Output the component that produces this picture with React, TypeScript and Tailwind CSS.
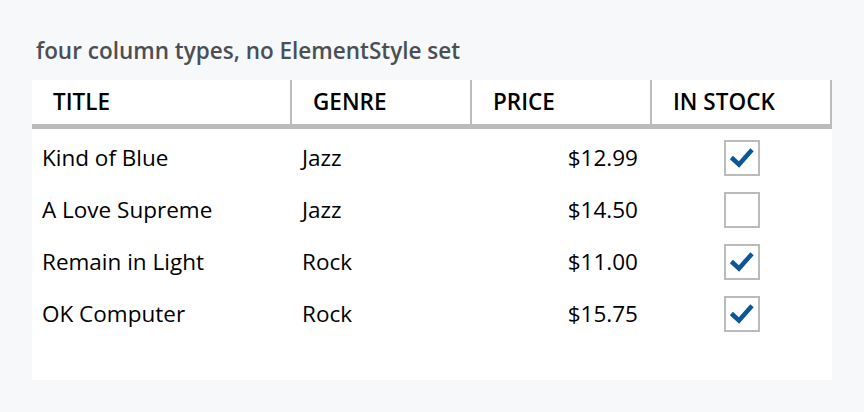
import React from "react";

const rows = [
  { title: "Kind of Blue", genre: "Jazz", price: "$12.99", stock: true },
  { title: "A Love Supreme", genre: "Jazz", price: "$14.50", stock: false },
  { title: "Remain in Light", genre: "Rock", price: "$11.00", stock: true },
  { title: "OK Computer", genre: "Rock", price: "$15.75", stock: true },
];

function Check({ on }: { on: boolean }) {
  return (
    <div className="w-[36px] h-[36px] border-2 border-[#bbbbbb] bg-white flex items-center justify-center">
      {on && (
        <svg width="36" height="36" viewBox="0 0 36 36" className="shrink-0">
          <path d="M9 19 L15 24.5 L26.5 11.5" fill="none" stroke="#0b5697" strokeWidth="4.5" strokeLinecap="square" strokeLinejoin="miter" />
        </svg>
      )}
    </div>
  );
}

export default function App() {
  return (
    <div
      className="w-[864px] h-[412px] bg-[#f7f8fa] pt-[32px] px-[32px]"
      style={{ fontFamily: '"Segoe UI", "Open Sans", "Noto Sans", sans-serif' }}
    >
      <div className="h-[38px] pl-[4px] text-[22.5px] font-semibold text-[#4a4f56] leading-[38px] whitespace-nowrap">
        four column types, no ElementStyle set
      </div>
      <div className="w-[800px] h-[300px] bg-white mt-[10px]">
        <div className="flex h-[44px] text-[22.5px] font-semibold text-black whitespace-nowrap">
          <div className="w-[260px] border-r-2 border-[#bbbbbb] pl-[21px] flex items-center">TITLE</div>
          <div className="w-[180px] border-r-2 border-[#bbbbbb] pl-[21px] flex items-center">GENRE</div>
          <div className="w-[180px] border-r-2 border-[#bbbbbb] pl-[21px] flex items-center">PRICE</div>
          <div className="w-[180px] border-r-2 border-[#bbbbbb] pl-[21px] flex items-center">IN STOCK</div>
        </div>
        <div className="h-[5px] bg-[#bbbbbb]" />
        <div className="pt-[3px]">
          {rows.map((r) => (
            <div key={r.title} className="flex h-[52px] items-center text-[22.5px] text-black whitespace-nowrap">
              <div className="w-[260px] pl-[10px]">{r.title}</div>
              <div className="w-[180px] pl-[10px]">{r.genre}</div>
              <div className="w-[180px] pr-[14px] text-right">{r.price}</div>
              <div className="w-[180px] flex justify-center">
                <Check on={r.stock} />
              </div>
            </div>
          ))}
        </div>
      </div>
    </div>
  );
}
